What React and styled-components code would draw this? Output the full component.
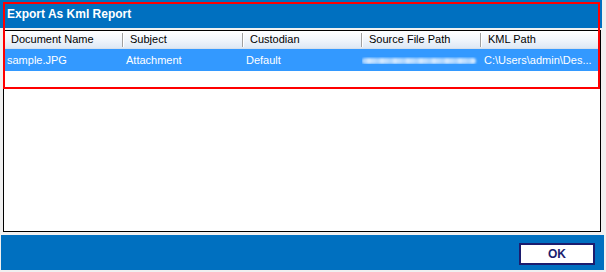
import React from 'react';
import styled, { createGlobalStyle } from 'styled-components';

const GlobalStyle = createGlobalStyle`
  html, body {
    margin: 0;
    padding: 0;
    background: #f0f0f0;
  }
  body {
    font-family: "Liberation Sans", Arial, sans-serif;
  }
`;

const columns = [
  { key: 'name', title: 'Document Name', width: 119 },
  { key: 'subject', title: 'Subject', width: 120 },
  { key: 'custodian', title: 'Custodian', width: 119 },
  { key: 'source', title: 'Source File Path', width: 119 },
  { key: 'kml', title: 'KML Path', width: 118 },
];

const rows = [
  {
    name: 'sample.JPG',
    subject: 'Attachment',
    custodian: 'Default',
    source: null,
    kml: 'C:\\Users\\admin\\Des...',
  },
];

const Window = styled.div`
  position: relative;
  width: 605px;
  height: 272px;
  display: flex;
  flex-direction: column;
  background: #f0f0f0;
`;

const TitleBar = styled.div`
  height: 28px;
  margin-right: 3px;
  padding-left: 7px;
  display: flex;
  align-items: center;
  background: #0070c0;
  color: #fff;
  font-weight: bold;
  font-size: 12px;
`;

const Grid = styled.div`
  margin: 2px 4px 0 3px;
  height: 202px;
  box-sizing: border-box;
  border: 1px solid #000;
  background: #fff;
  overflow: hidden;
`;

const HeaderRow = styled.div`
  display: flex;
  height: 17px;
  background: linear-gradient(#ffffff, #f3f7fc 45%, #dde8f5);
  border-bottom: 1px solid #d5dfec;
`;

const HeaderCell = styled.div`
  position: relative;
  width: ${(p) => p.$w}px;
  flex: none;
  box-sizing: border-box;
  padding-left: 7px;
  font-size: 11px;
  line-height: 17px;
  color: #000;
  white-space: nowrap;

  &::after {
    content: '';
    display: ${(p) => (p.$last ? 'none' : 'block')};
    position: absolute;
    right: 0;
    top: 2px;
    bottom: 1px;
    width: 1px;
    background: #a0a0a0;
    box-shadow: 1px 0 0 #fff;
  }
`;

const Row = styled.div`
  display: flex;
  height: 22px;
  align-items: center;
  background: ${(p) => (p.$selected ? '#3399ff' : '#fff')};
  color: ${(p) => (p.$selected ? '#fff' : '#000')};
`;

const Cell = styled.div`
  width: ${(p) => p.$w}px;
  flex: none;
  box-sizing: border-box;
  padding-left: 3px;
  font-size: 11px;
  white-space: nowrap;
  overflow: hidden;
`;

const Blurred = styled.div`
  width: 114px;
  height: 6px;
  margin-left: -3px;
  margin-top: 1px;
  border-radius: 3px;
  background: repeating-linear-gradient(90deg, #c8e3ff 0 5px, #eef6ff 5px 9px, #d9ecff 9px 13px),
    #d6eaff;
  opacity: 0.85;
  filter: blur(1.3px);
`;

const Footer = styled.div`
  margin: 3px 1px 0 1px;
  height: 35px;
  background: #0070c0;
  display: flex;
  justify-content: flex-end;
  align-items: flex-start;
  padding: 8px 9px 0 0;
  box-sizing: border-box;
`;

const Button = styled.button`
  width: 76px;
  height: 22px;
  box-sizing: border-box;
  border: 1px solid #1c1c6e;
  outline: 1px solid #1c1c6e;
  outline-offset: -2px;
  background: #fff;
  color: #1c1c6e;
  font-family: "Liberation Sans", Arial, sans-serif;
  font-weight: bold;
  font-size: 12px;
  padding: 0;
`;

const Annotation = styled.div`
  position: absolute;
  left: 3px;
  top: 2px;
  width: 597px;
  height: 87px;
  box-sizing: border-box;
  border: 2px solid #ff0000;
  pointer-events: none;
`;

export default function App() {
  return (
    <>
      <GlobalStyle />
      <Window>
        <TitleBar>Export As Kml Report</TitleBar>
        <Grid>
          <HeaderRow>
            {columns.map((c, i) => (
              <HeaderCell key={c.key} $w={c.width} $last={i === columns.length - 1}>
                {c.title}
              </HeaderCell>
            ))}
          </HeaderRow>
          {rows.map((r, i) => (
            <Row key={i} $selected>
              {columns.map((c) => (
                <Cell key={c.key} $w={c.width}>
                  {r[c.key] === null ? <Blurred /> : r[c.key]}
                </Cell>
              ))}
            </Row>
          ))}
        </Grid>
        <Footer>
          <Button>OK</Button>
        </Footer>
        <Annotation />
      </Window>
    </>
  );
}
